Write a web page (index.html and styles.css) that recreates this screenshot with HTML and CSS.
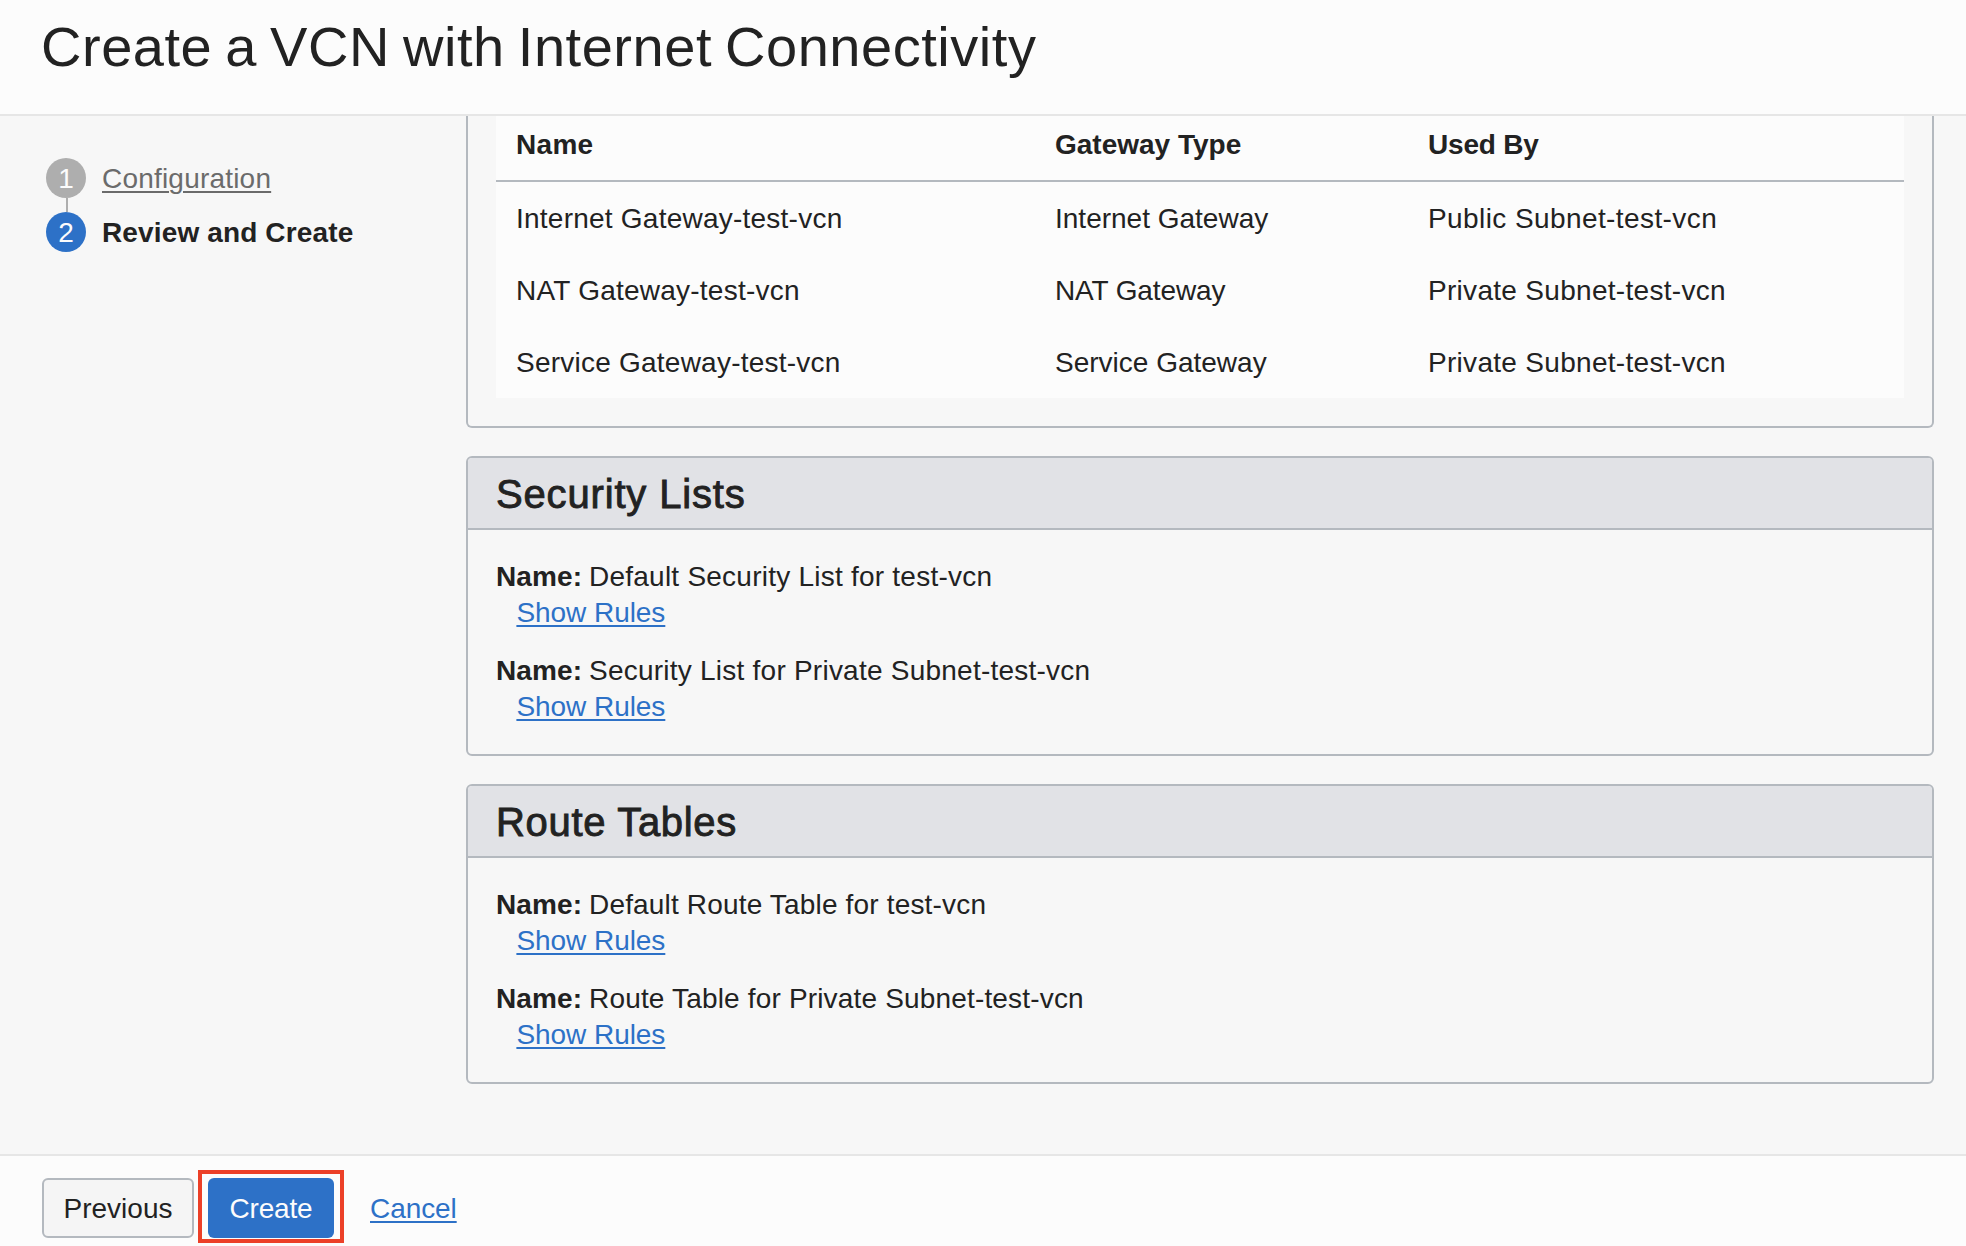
FILE: index.html
```html
<!DOCTYPE html>
<html lang="en">
<head>
<meta charset="utf-8">
<title>Create a VCN with Internet Connectivity</title>
<link rel="stylesheet" href="styles.css">
</head>
<body>
<header class="header">
  <h1 class="title">Create a VCN with Internet Connectivity</h1>
</header>
<main class="main">
  <nav class="steps">
    <div class="step">
      <span class="num">1</span>
      <a class="step-link" href="#">Configuration</a>
    </div>
    <span class="connector"></span>
    <div class="step current">
      <span class="num">2</span>
      <span class="step-name">Review and Create</span>
    </div>
  </nav>
  <div class="content">
    <section class="panel gateways">
      <div class="table">
        <div class="row head"><span class="ls-name">Name</span><span>Gateway Type</span><span class="ls-used">Used By</span></div>
        <div class="row"><span class="ls-wide">Internet Gateway-test-vcn</span><span>Internet Gateway</span><span class="ls-public">Public Subnet-test-vcn</span></div>
        <div class="row"><span class="ls-wide">NAT Gateway-test-vcn</span><span class="ls-nat">NAT Gateway</span><span class="ls-private">Private Subnet-test-vcn</span></div>
        <div class="row"><span class="ls-wide">Service Gateway-test-vcn</span><span>Service Gateway</span><span class="ls-private">Private Subnet-test-vcn</span></div>
      </div>
    </section>
    <section class="panel">
      <h2 class="panel-title">Security Lists</h2>
      <div class="panel-body">
        <div class="item">
          <div class="line"><b class="label">Name:</b><span class="ls-wide">Default Security List for test-vcn</span></div>
          <a class="link" href="#">Show Rules</a>
        </div>
        <div class="item">
          <div class="line"><b class="label">Name:</b><span class="ls-wide">Security List for Private Subnet-test-vcn</span></div>
          <a class="link" href="#">Show Rules</a>
        </div>
      </div>
    </section>
    <section class="panel">
      <h2 class="panel-title routes">Route Tables</h2>
      <div class="panel-body">
        <div class="item">
          <div class="line"><b class="label">Name:</b><span class="ls-route">Default Route Table for test-vcn</span></div>
          <a class="link" href="#">Show Rules</a>
        </div>
        <div class="item">
          <div class="line"><b class="label">Name:</b><span class="ls-route">Route Table for Private Subnet-test-vcn</span></div>
          <a class="link" href="#">Show Rules</a>
        </div>
      </div>
    </section>
  </div>
</main>
<footer class="footer">
  <button class="btn">Previous</button>
  <div class="highlight"><button class="btn primary">Create</button></div>
  <a class="link cancel" href="#">Cancel</a>
</footer>
</body>
</html>
```
FILE: styles.css
```css
* { box-sizing: border-box; }

body {
  margin: 0;
  height: 1246px;
  overflow: hidden;
  display: flex;
  flex-direction: column;
  background: #f7f7f7;
  color: #222;
  font: 28px/38px "Liberation Sans", Arial, sans-serif;
  white-space: nowrap;
}

.header {
  flex: none;
  height: 116px;
  padding: 14px 41px 0;
  background: #fcfcfc;
  border-bottom: 2px solid #e6e6e6;
}

.title {
  margin: 0;
  font-size: 56px;
  line-height: 66px;
  font-weight: 400;
  letter-spacing: 0.53px;
  word-spacing: -3px;
}

.main {
  flex: 1;
  min-height: 0;
  display: flex;
}

.steps {
  width: 466px;
  padding: 42px 0 0 46px;
}

.step {
  display: flex;
  align-items: center;
  gap: 16px;
  height: 40px;
}

.num {
  width: 40px;
  height: 40px;
  border-radius: 50%;
  background: #aeaeae;
  color: #fcfcfc;
  line-height: 42px;
  text-align: center;
}

.step-link,
.step-name { padding-top: 2px; }

.step-link {
  color: #6b6b6b;
  letter-spacing: 0.2px;
  text-decoration-thickness: 2px;
  text-underline-offset: 3px;
}

.connector {
  display: block;
  width: 2px;
  height: 14px;
  margin-left: 20px;
  background: #aeaeae;
}

.current .num { background: #2d71c7; }
.current .step-name { font-weight: 700; letter-spacing: 0.14px; }

.content {
  width: 1468px;
  display: flex;
  flex-direction: column;
  gap: 28px;
}

.panel {
  border: 2px solid #b4b9bf;
  border-radius: 6px;
}

.gateways {
  border-top: 0;
  border-radius: 0 0 6px 6px;
  padding: 0 28px 28px;
}

.table { background: #fcfcfc; }

.row {
  display: grid;
  grid-template-columns: 539px 373px 1fr;
  height: 72px;
  padding: 18px 0 0 20px;
}

.head {
  height: 66px;
  padding-top: 10px;
  border-bottom: 2px solid #b4b9bf;
  font-weight: 700;
}

.ls-name { letter-spacing: 0.3px; }
.ls-used { letter-spacing: -0.2px; }
.ls-wide { letter-spacing: 0.235px; }
.ls-nat { letter-spacing: -0.12px; }
.ls-public { letter-spacing: 0.41px; }
.ls-private { letter-spacing: 0.3px; }
.ls-route { letter-spacing: 0.17px; }

.panel-title {
  margin: 0;
  height: 72px;
  padding: 0 28px;
  background: #e1e2e6;
  border-bottom: 2px solid #b4b9bf;
  border-radius: 4px 4px 0 0;
  font-size: 40px;
  line-height: 72px;
  font-weight: 400;
  letter-spacing: 0.84px;
  -webkit-text-stroke: 0.9px #222;
}

.routes { letter-spacing: 0.68px; }

.panel-body {
  display: flex;
  flex-direction: column;
  gap: 22px;
  padding: 28px 28px 30px;
}

.item { height: 72px; }
.line { display: flex; height: 36px; }
.label { width: 93px; letter-spacing: 0.1px; }

.link {
  color: #2d71c7;
  text-decoration-thickness: 2px;
  text-decoration-skip-ink: none;
  text-underline-offset: 3px;
}

.item .link { margin-left: 20.4px; letter-spacing: -0.05px; }

.footer {
  flex: none;
  display: flex;
  align-items: flex-start;
  height: 92px;
  padding: 14px 42px 0;
  background: #fcfcfc;
  border-top: 2px solid #e6e6e6;
}

.btn {
  width: 152px;
  height: 60px;
  margin-top: 8px;
  padding: 2px 0 0;
  border: 2px solid #b4b9bf;
  border-radius: 6px;
  background: #f5f5f5;
  color: #222;
  font: inherit;
}

.highlight {
  width: 146px;
  height: 73px;
  margin-left: 4px;
  border: 4px solid #ec4028;
  padding: 4px 6px;
}

.primary {
  display: block;
  width: 126px;
  margin: 0;
  border: 0;
  background: #2d71c7;
  color: #fcfcfc;
  letter-spacing: -0.2px;
}

.cancel { margin: 20px 0 0 26px; letter-spacing: -0.08px; }
```
